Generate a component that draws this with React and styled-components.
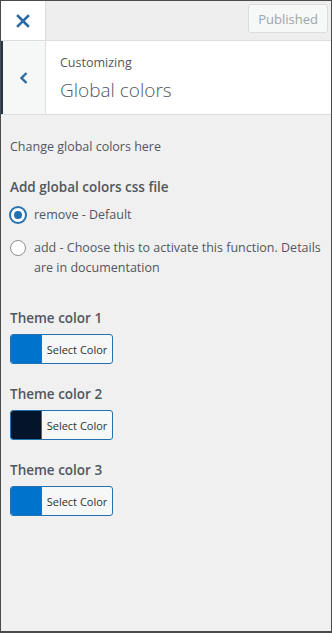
import React from 'react'
import styled, { createGlobalStyle } from 'styled-components'

const Global = createGlobalStyle`
  html, body { margin: 0; padding: 0; }
  body {
    font-family: "Open Sans", "Noto Sans", sans-serif;
    color: #50575e;
  }
`

const Frame = styled.div`
  box-sizing: border-box;
  width: 332px;
  height: 633px;
  border: 1px solid #4a4a4a;
  border-bottom-width: 2px;
  background: #f0f0f0;
  display: flex;
  flex-direction: column;
  overflow: hidden;
`

const TopBar = styled.div`
  display: flex;
  align-items: stretch;
  height: 39px;
  background: #eeeeee;
  border-bottom: 1px solid #dddddd;
`

const CloseButton = styled.div`
  width: 44px;
  background: #ffffff;
  border-right: 1px solid #dddddd;
  display: flex;
  align-items: center;
  justify-content: center;
`

const Spacer = styled.div`
  flex: 1;
`

const PublishedButton = styled.div`
  box-sizing: border-box;
  margin: 3px 3px 0 0;
  height: 29px;
  padding: 0 9px;
  border: 1px solid #dcdcde;
  border-radius: 3px;
  background: #f6f7f7;
  color: #a0a5aa;
  font-size: 13px;
  display: flex;
  align-items: center;
`

const Header = styled.div`
  display: flex;
  height: 73px;
  background: #ffffff;
  border-bottom: 1px solid #dddddd;
`

const BackButton = styled.div`
  box-sizing: border-box;
  width: 45px;
  background: #f6f7f7;
  border-left: 2px solid #23364a;
  border-right: 1px solid #dddddd;
  display: flex;
  align-items: center;
  justify-content: center;
`

const TitleBlock = styled.div`
  padding: 13px 14px 0 14px;
  display: flex;
  flex-direction: column;
`

const SmallTitle = styled.span`
  font-size: 12.5px;
  line-height: 18px;
  color: #50575e;
`

const BigTitle = styled.span`
  font-size: 19px;
  font-weight: 300;
  line-height: 28px;
  margin-top: 4px;
  color: #50575e;
`

const Content = styled.div`
  padding: 22px 9px 0 9px;
  display: flex;
  flex-direction: column;
`

const Description = styled.p`
  margin: 0 0 20px;
  font-size: 12.5px;
  line-height: 20px;
  color: #50575e;
`

const Label = styled.div`
  font-size: 13.5px;
  font-weight: 600;
  line-height: 20px;
  color: #50575e;
  margin-bottom: ${p => p.gap || 8}px;
`

const RadioRow = styled.label`
  display: flex;
  align-items: flex-start;
  gap: 8px;
  margin-bottom: 13px;
  font-size: 12.5px;
  line-height: 20px;
  color: #50575e;
`

const RadioCircle = styled.span`
  box-sizing: border-box;
  flex: none;
  width: 16px;
  height: 16px;
  margin-top: 2px;
  border-radius: 50%;
  border: 1px solid #8c8f94;
  background: #ffffff;
  display: flex;
  align-items: center;
  justify-content: center;
  box-shadow: ${p => (p.checked ? '0 0 0 1px #2271b1' : 'none')};
  border-color: ${p => (p.checked ? '#2271b1' : '#8c8f94')};
  &::after {
    content: '';
    display: ${p => (p.checked ? 'block' : 'none')};
    width: 8px;
    height: 8px;
    border-radius: 50%;
    background: #2271b1;
  }
`

const ColorSection = styled.div`
  margin-top: ${p => p.top}px;
`

const ColorButton = styled.div`
  box-sizing: border-box;
  display: flex;
  width: 103px;
  height: 30px;
  border: 1px solid #2271b1;
  border-radius: 3px;
  overflow: hidden;
  background: #f6f7f7;
`

const Swatch = styled.span`
  width: 30px;
  background: ${p => p.color};
  border-right: 1px solid #2271b1;
`

const SwatchText = styled.span`
  flex: 1;
  display: flex;
  align-items: center;
  justify-content: center;
  font-size: 11px;
  color: #2c3338;
`

const colors = [
  { name: 'Theme color 1', value: '#0074cc', top: 17 },
  { name: 'Theme color 2', value: '#03142b', top: 20 },
  { name: 'Theme color 3', value: '#0074cc', top: 20 },
]

export default function App() {
  return (
    <Frame>
      <Global />
      <TopBar>
        <CloseButton>
          <svg width="14" height="14" viewBox="0 0 14 14">
            <path d="M2 2 L12 12 M12 2 L2 12" stroke="#2a6aa6" strokeWidth="2.6" strokeLinecap="square" />
          </svg>
        </CloseButton>
        <Spacer />
        <PublishedButton>Published</PublishedButton>
      </TopBar>
      <Header>
        <BackButton>
          <svg width="10" height="14" viewBox="0 0 10 14">
            <path d="M7.5 2 L2.5 7 L7.5 12" fill="none" stroke="#2a6aa6" strokeWidth="2.4" />
          </svg>
        </BackButton>
        <TitleBlock>
          <SmallTitle>Customizing</SmallTitle>
          <BigTitle>Global colors</BigTitle>
        </TitleBlock>
      </Header>
      <Content>
        <Description>Change global colors here</Description>
        <Label>Add global colors css file</Label>
        <RadioRow>
          <RadioCircle checked />
          <span>remove - Default</span>
        </RadioRow>
        <RadioRow>
          <RadioCircle />
          <span>add - Choose this to activate this function. Details are in documentation</span>
        </RadioRow>
        {colors.map(c => (
          <ColorSection key={c.name} top={c.top}>
            <Label gap={6}>{c.name}</Label>
            <ColorButton>
              <Swatch color={c.value} />
              <SwatchText>Select Color</SwatchText>
            </ColorButton>
          </ColorSection>
        ))}
      </Content>
    </Frame>
  )
}
